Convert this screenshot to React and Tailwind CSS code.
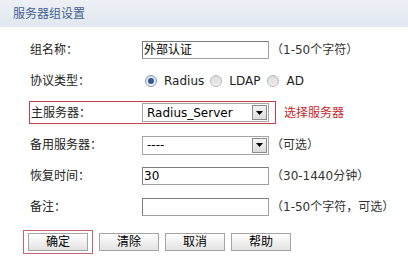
const font = { fontFamily: '"DejaVu Sans", "Noto Sans CJK SC", sans-serif' };

function TextBox({ value = "" }) {
  return (
    <input
      readOnly
      value={value}
      className="w-[127px] h-[18px] border border-[#a0a0a0] border-t-[#7c7c7c] border-l-[#7c7c7c] bg-white px-[1px] text-[12px] text-black outline-none"
      style={font}
    />
  );
}

function SelectBox({ value }) {
  return (
    <div className="w-[127px] h-[19px] border border-[#a5a5a5] bg-white flex items-center justify-between pl-[4px] pr-[1px]">
      <span className="text-[12px] text-black leading-none">{value}</span>
      <span className="w-[15px] h-[15px] border border-[#8c8c8c] bg-gradient-to-b from-[#f4f4f4] to-[#dcdcdc] flex items-center justify-center">
        <svg width="7" height="4" viewBox="0 0 7 4">
          <path d="M0 0h7L3.5 4z" fill="#000" />
        </svg>
      </span>
    </div>
  );
}

function Radio({ checked }) {
  return checked ? (
    <span className="w-[12px] h-[12px] rounded-full border border-[#8a9bb0] bg-gradient-to-b from-[#d6dde6] to-[#f4f6f9] flex items-center justify-center">
      <span className="w-[6px] h-[6px] rounded-full bg-[#2f5d95]" />
    </span>
  ) : (
    <span className="w-[12px] h-[12px] rounded-full border border-[#b7b7b7] bg-gradient-to-b from-[#d9d9d9] to-[#f2f2f2] flex items-center justify-center">
      <span className="w-[6px] h-[6px] rounded-full bg-[#e4e4e4]" />
    </span>
  );
}

function Row({ label, h, children, hint }) {
  return (
    <div className={`flex items-center pl-[30px] ${h}`}>
      <span className="w-[112px] text-[12px] text-[#222]">{label}</span>
      {children}
      {hint && <span className="ml-[2px] text-[12px] text-[#333]">{hint}</span>}
    </div>
  );
}

function Btn({ children }) {
  return (
    <button className="w-[60px] h-[18px] border border-[#a4a4a4] bg-gradient-to-b from-white to-[#e2e2e2] text-[12px] text-black leading-none">
      {children}
    </button>
  );
}

export default function App() {
  return (
    <div className="w-[408px] h-[261px] bg-white overflow-hidden" style={font}>
      <div className="h-[27px] bg-gradient-to-b from-[#edf1f6] to-[#e1e7ef] flex items-center pl-[13px]">
        <span className="text-[12px] text-[#3f5f90]">服务器组设置</span>
      </div>

      <div className="pt-[8px]">
        <Row label="组名称：" h="h-[30px]" hint="（1-50个字符）">
          <TextBox value="外部认证" />
        </Row>

        <Row label="协议类型：" h="h-[31px]">
          <div className="flex items-center text-[12px] text-[#222]">
            <span className="ml-[3px]"><Radio checked /></span>
            <span className="ml-[7px]">Radius</span>
            <span className="ml-[6px]"><Radio /></span>
            <span className="ml-[7px]">LDAP</span>
            <span className="ml-[7px]"><Radio /></span>
            <span className="ml-[7px]">AD</span>
          </div>
        </Row>

        <div className="flex items-center pl-[29px] h-[33px]">
          <div className="flex items-center border border-[#c4404c] pl-[1px] pr-[6px] h-[23px]">
            <span className="w-[111px] text-[12px] text-[#222]">主服务器：</span>
            <SelectBox value="Radius_Server" />
          </div>
          <span className="ml-[8px] text-[12px] text-[#c8262c]">选择服务器</span>
        </div>

        <Row label="备用服务器：" h="h-[32px]" hint="（可选）">
          <SelectBox value="----" />
        </Row>

        <Row label="恢复时间：" h="h-[30px]" hint="（30-1440分钟）">
          <TextBox value="30" />
        </Row>

        <Row label="备注：" h="h-[31px]" hint="（1-50个字符，可选）">
          <TextBox />
        </Row>

        <div className="flex items-center pl-[23px] mt-[8px] gap-[6px]">
          <div className="border border-[#c86470] px-[4px] py-[2px] flex">
            <Btn>确定</Btn>
          </div>
          <Btn>清除</Btn>
          <Btn>取消</Btn>
          <Btn>帮助</Btn>
        </div>
      </div>
    </div>
  );
}
